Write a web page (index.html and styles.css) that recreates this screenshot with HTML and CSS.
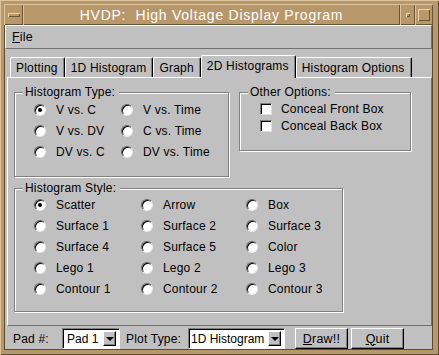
FILE: index.html
```html
<!DOCTYPE html>
<html lang="en">
<head>
    <meta charset="UTF-8">
    <title>HVDP: High Voltage Display Program</title>
    <link rel="stylesheet" href="styles.css">
</head>
<body>
    <div class="window">
        <div class="titlebar">
            <div class="tb-btn tb-menu"><span class="tb-bar"></span></div>
            <div class="tb-title">HVDP:  High Voltage Display Program</div>
            <div class="tb-btn tb-min"><span class="tb-dot"></span></div>
            <div class="tb-btn tb-max"><span class="tb-square"></span></div>
        </div>

        <div class="client">
            <div class="menubar">
                <span class="menu-item"><u>F</u>ile</span>
            </div>

            <div class="tabs">
                <div class="tab">Plotting</div>
                <div class="tab">1D Histogram</div>
                <div class="tab">Graph</div>
                <div class="tab active">2D Histograms</div>
                <div class="tab">Histogram Options</div>
            </div>

            <div class="panel">
                <div class="top-row">
                    <fieldset class="group type-group">
                        <legend>Histogram Type:</legend>
                        <div class="options type-options">
                            <label class="option"><span class="radio checked"></span>V vs. C</label>
                            <label class="option"><span class="radio"></span>V vs. Time</label>
                            <label class="option"><span class="radio"></span>V vs. DV</label>
                            <label class="option"><span class="radio"></span>C vs. Time</label>
                            <label class="option"><span class="radio"></span>DV vs. C</label>
                            <label class="option"><span class="radio"></span>DV vs. Time</label>
                        </div>
                    </fieldset>

                    <fieldset class="group other-group">
                        <legend>Other Options:</legend>
                        <div class="checks">
                            <label class="check-option"><span class="checkbox"></span>Conceal Front Box</label>
                            <label class="check-option"><span class="checkbox"></span>Conceal Back Box</label>
                        </div>
                    </fieldset>
                </div>

                <fieldset class="group style-group">
                    <legend>Histogram Style:</legend>
                    <div class="options style-options">
                        <label class="option"><span class="radio checked"></span>Scatter</label>
                        <label class="option"><span class="radio"></span>Arrow</label>
                        <label class="option"><span class="radio"></span>Box</label>
                        <label class="option"><span class="radio"></span>Surface 1</label>
                        <label class="option"><span class="radio"></span>Surface 2</label>
                        <label class="option"><span class="radio"></span>Surface 3</label>
                        <label class="option"><span class="radio"></span>Surface 4</label>
                        <label class="option"><span class="radio"></span>Surface 5</label>
                        <label class="option"><span class="radio"></span>Color</label>
                        <label class="option"><span class="radio"></span>Lego 1</label>
                        <label class="option"><span class="radio"></span>Lego 2</label>
                        <label class="option"><span class="radio"></span>Lego 3</label>
                        <label class="option"><span class="radio"></span>Contour 1</label>
                        <label class="option"><span class="radio"></span>Contour 2</label>
                        <label class="option"><span class="radio"></span>Contour 3</label>
                    </div>
                </fieldset>
            </div>

            <div class="bottombar">
                <span class="field-label pad-label">Pad #:</span>
                <div class="select pad-select">
                    <span class="select-text">Pad 1</span>
                    <span class="select-arrow"></span>
                </div>
                <span class="field-label plot-label">Plot Type:</span>
                <div class="select plot-select">
                    <span class="select-text">1D Histogram</span>
                    <span class="select-arrow"></span>
                </div>
                <button class="btn draw-btn"><u>D</u>raw!!</button>
                <button class="btn quit-btn"><u>Q</u>uit</button>
            </div>
        </div>
    </div>
</body>
</html>
```

FILE: styles.css
```css
* {
    box-sizing: border-box;
}
body {
    margin: 0;
    font-family: "Liberation Sans", Arial, sans-serif;
    font-size: 12px;
    letter-spacing: 0.2px;
    color: #000;
    background-color: #c0c0c0;
}
.window {
    width: 439px;
    height: 355px;
    background-color: #b8976b;
    padding: 4px 6px 5px 4px;
    display: flex;
    flex-direction: column;
    box-shadow: inset 1px 1px #dcc39c, inset -1px -1px #5e4a30;
}

/* title bar */
.titlebar {
    height: 21px;
    display: flex;
}
.tb-btn,
.tb-title {
    display: flex;
    align-items: center;
    justify-content: center;
    box-shadow: inset 1px 1px #dcc39c, inset -1px -1px #6b5535;
}
.tb-menu {
    width: 19px;
}
.tb-bar {
    width: 12px;
    height: 4px;
    box-shadow: inset 1px 1px #e6d2b0, inset -1px -1px #6b5535;
}
.tb-title {
    flex: 1;
    color: #fff;
    font-size: 14px;
    letter-spacing: 0.75px;
    white-space: pre;
}
.tb-min {
    width: 15px;
}
.tb-dot {
    width: 4px;
    height: 4px;
    box-shadow: inset 1px 1px #e6d2b0, inset -1px -1px #6b5535;
}
.tb-max {
    width: 18px;
}
.tb-square {
    width: 12px;
    height: 12px;
    box-shadow: inset 1px 1px #e6d2b0, inset -1px -1px #6b5535;
}

/* client area */
.client {
    flex: 1;
    display: flex;
    flex-direction: column;
    background-color: #c0c0c0;
    border: 1px solid #5e4a30;
    border-top: none;
}
.menubar {
    height: 24px;
    display: flex;
    align-items: center;
    padding-left: 6px;
    border: 1px solid;
    border-color: #fff #707070 #707070 #fff;
}
.menu-item {
    font-size: 12.5px;
}

/* notebook tabs */
.tabs {
    display: flex;
    align-items: flex-end;
    height: 28px;
    padding-left: 5px;
}
.tab {
    height: 20px;
    display: flex;
    align-items: center;
    padding: 0 6px 0 5px;
    border-top: 1px solid #fff;
    border-left: 1px solid #fff;
    border-right: 1px solid #000;
    box-shadow: inset -1px 0 #808080;
    border-radius: 2px 2px 0 0;
    white-space: nowrap;
}
.tab.active {
    height: 23px;
    margin-bottom: -1px;
    padding-bottom: 2px;
    background-color: #c0c0c0;
    position: relative;
    z-index: 1;
}

.panel {
    height: 249px;
    margin-left: 2px;
    padding: 7px 6px 0 6px;
    border: 1px solid;
    border-color: #fff #707070 #707070 #fff;
}
.top-row {
    display: flex;
    align-items: flex-start;
}

/* etched groups */
.group {
    margin: 0;
    min-width: 0;
    padding: 0 0 14px 8px;
    border: 1px solid #808080;
    box-shadow: inset 1px 1px #fff, 1px 1px #fff;
}
.group legend {
    padding: 0 4px 0 2px;
    line-height: 14px;
    background-color: #c0c0c0;
}
.type-group {
    width: 215px;
}
.other-group {
    width: 172px;
    margin-left: 10px;
    padding-bottom: 16px;
}
.style-group {
    width: 329px;
    margin-top: 4px;
    padding-bottom: 12px;
}

.options {
    display: grid;
    margin-left: 11px;
}
.type-options {
    grid-template-columns: 87px 1fr;
}
.style-options {
    grid-template-columns: 107px 105px 1fr;
    margin-top: -1px;
}
.option {
    height: 21px;
    display: flex;
    align-items: center;
    white-space: nowrap;
}
.radio {
    width: 12px;
    height: 12px;
    margin-right: 10px;
    border-radius: 50%;
    background-color: #fff;
    border: 1px solid;
    border-color: #606060 #e8e8e8 #e8e8e8 #606060;
    box-shadow: inset 1px 1px #000;
    display: flex;
    align-items: center;
    justify-content: center;
}
.radio.checked::after {
    content: "";
    width: 4px;
    height: 4px;
    border-radius: 50%;
    background-color: #000;
}

.checks {
    margin-left: 12px;
    padding-top: 1px;
}
.check-option {
    height: 17px;
    display: flex;
    align-items: center;
    white-space: nowrap;
}
.checkbox {
    width: 12px;
    height: 12px;
    margin-right: 9px;
    background-color: #fff;
    border: 1px solid;
    border-color: #808080 #e0e0e0 #e0e0e0 #808080;
    box-shadow: inset 1px 1px #000;
}

/* bottom controls */
.bottombar {
    flex: 1;
    display: flex;
    align-items: center;
    padding: 2px 0 0 8px;
}
.pad-label {
    width: 49px;
}
.plot-label {
    margin-left: 6px;
    width: 62px;
}
.select {
    height: 21px;
    display: flex;
    align-items: center;
    padding: 0 3px 0 4px;
    background-color: #fff;
    border: 1px solid;
    border-color: #808080 #fff #fff #808080;
    box-shadow: inset 1px 1px #000;
}
.pad-select {
    width: 58px;
}
.plot-select {
    width: 97px;
    padding-left: 2px;
}
.select-text {
    flex: 1;
    font-size: 12px;
    letter-spacing: 0;
    white-space: nowrap;
}
.select-arrow {
    flex: none;
    width: 13px;
    height: 15px;
    display: flex;
    align-items: center;
    justify-content: center;
    background-color: #c0c0c0;
    border: 1px solid;
    border-color: #fff #000 #000 #fff;
    box-shadow: inset -1px -1px #808080;
}
.select-arrow::after {
    content: "";
    border-left: 4px solid transparent;
    border-right: 4px solid transparent;
    border-top: 4px solid #000;
    margin-top: 1px;
}
.btn {
    width: 53px;
    height: 21px;
    padding: 0;
    font-family: inherit;
    font-size: 12.5px;
    letter-spacing: 0.2px;
    color: #000;
    background-color: #c0c0c0;
    border: 1px solid;
    border-color: #fff #000 #000 #fff;
    box-shadow: inset -1px -1px #808080;
}
.draw-btn {
    margin-left: 10px;
}
.quit-btn {
    margin-left: 3px;
}
```
